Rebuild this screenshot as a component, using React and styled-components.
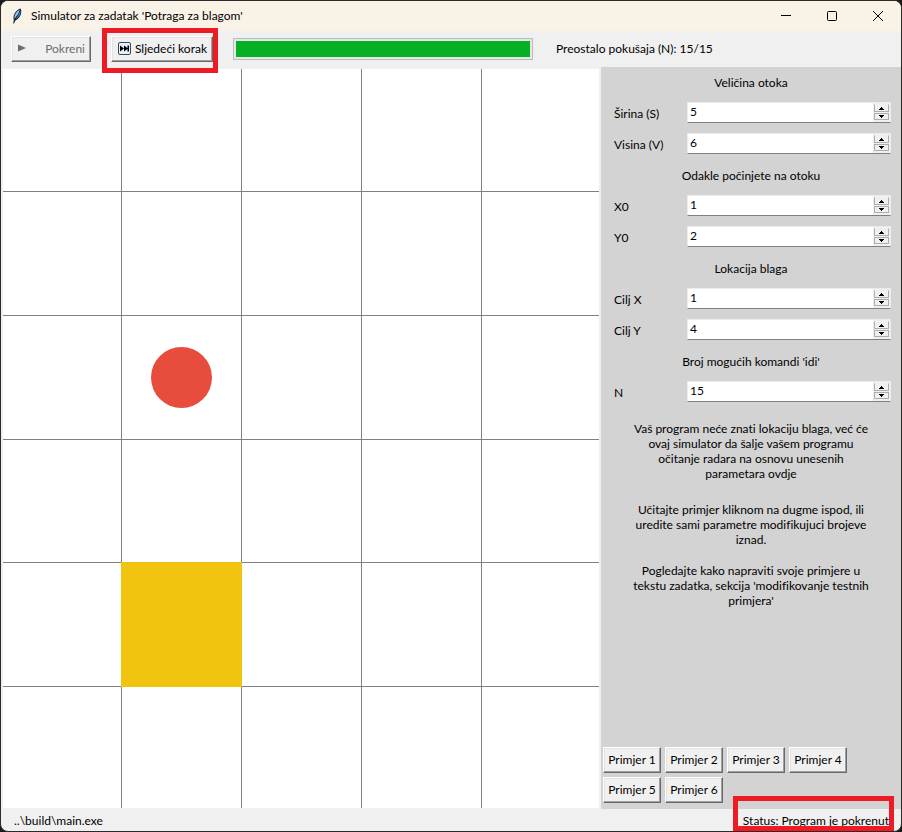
import React, { useState } from "react";
import styled, { createGlobalStyle, css } from "styled-components";

const GlobalStyle = createGlobalStyle`
  *, *::before, *::after { box-sizing: border-box; }
  html, body { margin: 0; height: 100%; background: #1c1a19; }
  body, button, input {
    font-family: "Lato", "Open Sans", sans-serif;
    font-size: 12px;
    font-variant-ligatures: none;
    line-height: 15px;
    color: #000;
  }
  h1, h2, p { margin: 0; font-size: inherit; font-weight: 400; }
`;

const Window = styled.div`
  position: relative;
  display: flex;
  flex-direction: column;
  min-height: 100vh;
  border: 1px solid #2b2a29;
  border-radius: 8px;
  background: #f0f0f0;
  overflow: hidden;
`;

const TitleBar = styled.header`
  display: flex;
  align-items: center;
  height: 30px;
  padding-left: 10px;
  background: #f9f2e6;
`;

const Title = styled.h1`
  flex: 1;
  padding: 0 0 2px 8px;
  white-space: nowrap;
`;

const CaptionButton = styled.button`
  display: grid;
  place-items: center;
  width: 46px;
  height: 30px;
  padding: 0;
  border: 0;
  background: transparent;
`;

const Toolbar = styled.div`
  display: flex;
  align-items: center;
  height: 36px;
  padding: 0 10px;
`;

const bevel = css`
  border: 1px solid;
  border-color: #fff #696969 #696969 #fff;
  box-shadow: inset -1px -1px 0 #a0a0a0, inset 1px 1px 0 #e3e3e3;
  background: #f0f0f0;
`;

const ToolButton = styled.button`
  ${bevel}
  display: flex;
  align-items: center;
  justify-content: space-between;
  width: ${(p) => p.$width}px;
  height: 26px;
  margin-right: 20px;
  padding: 0 5px 2px 6px;
  white-space: nowrap;
  &:disabled { color: #6d6d6d; }
`;

const ProgressTrack = styled.div`
  width: 300px;
  height: 22px;
  padding: 2px;
  border: 1px solid #bcbcbc;
  background: #e6e6e6;
`;

const ProgressFill = styled.div`
  height: 100%;
  background: #06b025;
`;

const Attempts = styled.span`
  padding: 0 0 2px 23px;
  white-space: nowrap;
`;

const Body = styled.main`
  display: flex;
  flex: 1;
`;

const Board = styled.div`
  flex: 1;
  display: grid;
  grid-template-columns: 118fr 120fr 120fr 120fr 118fr;
  grid-template-rows: 122fr 124fr 124fr 123fr 124fr 122fr;
  margin: 2px 2px 1px;
  background: #fff;
`;

const Cell = styled.div`
  position: relative;
  display: grid;
  place-items: center;
  border: 0 solid #808080;
  border-left-width: ${(p) => (p.$x ? 1 : 0)}px;
  border-top-width: ${(p) => (p.$y ? 1 : 0)}px;
`;

const Player = styled.div`
  width: 61px;
  height: 61px;
  border-radius: 50%;
  background: #e74c3c;
`;

const Treasure = styled.div`
  position: absolute;
  z-index: 1;
  inset: -1px;
  background: #f1c40f;
`;

const Sidebar = styled.aside`
  display: flex;
  flex-direction: column;
  width: 300px;
  background: #d3d3d3;
`;

const GroupTitle = styled.h2`
  height: 31px;
  line-height: 31px;
  text-align: center;
`;

const FieldRow = styled.div`
  display: flex;
  align-items: center;
  height: 31px;
  padding: 0 10px 0 13px;
`;

const FieldLabel = styled.label`
  width: 73px;
`;

const SpinBox = styled.div`
  display: flex;
  flex: 1;
  height: 21px;
  margin-bottom: 2px;
  border: 1px solid #ececec;
  border-bottom-color: #808080;
  background: #fff;
`;

const SpinInput = styled.input`
  flex: 1;
  min-width: 0;
  height: 17px;
  padding: 0 2px;
  border: 0;
  outline: 0;
  background: transparent;
  appearance: textfield;
  &::-webkit-inner-spin-button { appearance: none; margin: 0; }
`;

const SpinArrows = styled.div`
  display: grid;
  gap: 1px;
  grid-template-rows: 8px 7px;
  padding: 1px;
  background: #f0f0f0;
`;

const SpinButton = styled.button`
  display: grid;
  place-items: center;
  width: 15px;
  padding: 0;
  border: 1px solid #adadad;
  border-top-color: ${(p) => (p.$up ? "#f0f0f0" : "#adadad")};
  background: #f0f0f0;
`;

const Notes = styled.div`
  padding: 13px 24px 0;
  text-align: center;
`;

const Note = styled.p`
  margin-bottom: ${(p) => p.$gap}px;
  white-space: pre-line;
`;

const Examples = styled.div`
  display: flex;
  flex-wrap: wrap;
  gap: 4px;
  margin-top: auto;
  padding: 0 40px 6px 2px;
`;

const ExampleButton = styled.button`
  ${bevel}
  width: 58px;
  height: 26px;
  padding: 0 0 2px;
  white-space: nowrap;
`;

const StatusBar = styled.footer`
  display: flex;
  align-items: center;
  justify-content: space-between;
  height: 22px;
  padding: 0 12px 0 13px;
`;

const Marker = styled.div`
  position: absolute;
  border: 5px solid #ed1c24;
  pointer-events: none;
`;

const StepMarker = styled(Marker)`
  top: 27px;
  left: 101px;
  width: 116px;
  height: 45px;
`;

const StatusMarker = styled(Marker)`
  right: 7px;
  bottom: 0;
  width: 161px;
  height: 35px;
`;

const FeatherIcon = () => (
  <svg width="12" height="16" viewBox="0 0 12 16" aria-hidden="true">
    <path d="M2.2 15.5 2.8 12C1.6 8 4.2 2.4 9.6.6 11.6 4.6 9.2 10.4 4.4 12.4L3 15.5Z" fill="#16202e" />
    <path d="M3.4 10.8C3 7.4 5.4 3.2 8.8 1.8 8 5 5.4 8.6 3.4 10.8Z" fill="#9cc6f4" />
    <path d="M4.4 11C6.4 8.6 8.4 5.4 9.4 2.4 10.2 5.6 8.2 9.6 4.4 11Z" fill="#3f82d0" />
  </svg>
);

const PlayIcon = () => (
  <svg width="8" height="8" viewBox="0 0 8 8" aria-hidden="true">
    <path d="M0 0.5 8 4 0 7.5Z" fill="#6d6d6d" />
  </svg>
);

const NextIcon = () => (
  <svg width="13" height="13" viewBox="0 0 13 13" aria-hidden="true">
    <rect x="0.5" y="0.5" width="12" height="12" rx="1.5" fill="#e6f0fa" stroke="#3d4657" />
    <path d="M2 3.5 6 6.5 2 9.5ZM6 3.5 10 6.5 6 9.5ZM9.5 3.5H11V9.5H9.5Z" fill="#000" />
  </svg>
);

const ArrowIcon = ({ up }) => (
  <svg width="5" height="3" viewBox="0 0 5 3" shapeRendering="crispEdges" aria-hidden="true">
    <path d={up ? "M2 0H3V1H4V2H5V3H0V2H1V1H2Z" : "M0 0H5V1H4V2H3V3H2V2H1V1H0Z"} fill="#000" />
  </svg>
);

const CAPTION_ICONS = [
  ["Minimiziraj", "M0 4.5H10"],
  ["Maksimiziraj", "M1.5.5H8.5Q9.5.5 9.5 1.5V8.5Q9.5 9.5 8.5 9.5H1.5Q.5 9.5.5 8.5V1.5Q.5.5 1.5.5Z"],
  ["Zatvori", "M0 0 10 10M10 0 0 10"],
];

const GROUPS = [
  ["Veličina otoka", [["width", "Širina (S)"], ["height", "Visina (V)"]]],
  ["Odakle počinjete na otoku", [["x0", "X0"], ["y0", "Y0"]]],
  ["Lokacija blaga", [["goalX", "Cilj X"], ["goalY", "Cilj Y"]]],
  ["Broj mogućih komandi 'idi'", [["n", "N"]]],
];

const NOTES = [
  [21, "Vaš program neće znati lokaciju blaga, već će\novaj simulator da šalje vašem programu\nočitanje radara na osnovu unesenih\nparametara ovdje"],
  [16, "Učitajte primjer kliknom na dugme ispod, ili\nuredite sami parametre modifikujuci brojeve\niznad."],
  [16, "Pogledajte kako napraviti svoje primjere u\ntekstu zadatka, sekcija 'modifikovanje testnih\nprimjera'"],
];

const COLUMNS = 5;
const ROWS = 6;

function SpinField({ id, label, value, onChange }) {
  return (
    <FieldRow>
      <FieldLabel htmlFor={id}>{label}</FieldLabel>
      <SpinBox>
        <SpinInput id={id} type="number" value={value} onChange={(e) => onChange(Number(e.target.value))} />
        <SpinArrows>
          <SpinButton type="button" $up aria-label={`${label} više`} onClick={() => onChange(value + 1)}>
            <ArrowIcon up />
          </SpinButton>
          <SpinButton type="button" aria-label={`${label} manje`} onClick={() => onChange(value - 1)}>
            <ArrowIcon />
          </SpinButton>
        </SpinArrows>
      </SpinBox>
    </FieldRow>
  );
}

export default function App() {
  const [values, setValues] = useState({ width: 5, height: 6, x0: 1, y0: 2, goalX: 1, goalY: 4, n: 15 });
  const left = 15;

  return (
    <>
      <GlobalStyle />
      <Window>
        <TitleBar>
          <FeatherIcon />
          <Title>Simulator za zadatak 'Potraga za blagom'</Title>
          {CAPTION_ICONS.map(([name, d]) => (
            <CaptionButton key={name} type="button" aria-label={name}>
              <svg width="10" height="10" viewBox="0 0 10 10" aria-hidden="true">
                <path d={d} fill="none" stroke="#000" />
              </svg>
            </CaptionButton>
          ))}
        </TitleBar>

        <Toolbar>
          <ToolButton type="button" $width={80} disabled>
            <PlayIcon />
            Pokreni
          </ToolButton>
          <ToolButton type="button" $width={102}>
            <NextIcon />
            Sljedeći korak
          </ToolButton>
          <ProgressTrack role="progressbar" aria-label="Preostalo pokušaja" aria-valuemin={0} aria-valuemax={15} aria-valuenow={left}>
            <ProgressFill style={{ width: `${(left / 15) * 100}%` }} />
          </ProgressTrack>
          <Attempts>Preostalo pokušaja (N): {left}/15</Attempts>
        </Toolbar>

        <Body>
          <Board>
            {Array.from({ length: COLUMNS * ROWS }, (_, i) => {
              const x = i % COLUMNS;
              const y = Math.floor(i / COLUMNS);
              return (
                <Cell key={i} $x={x} $y={y}>
                  {x === values.x0 && y === values.y0 && <Player />}
                  {x === values.goalX && y === values.goalY && <Treasure />}
                </Cell>
              );
            })}
          </Board>

          <Sidebar>
            {GROUPS.map(([title, fields]) => (
              <section key={title}>
                <GroupTitle>{title}</GroupTitle>
                {fields.map(([id, label]) => (
                  <SpinField
                    key={id}
                    id={id}
                    label={label}
                    value={values[id]}
                    onChange={(v) => setValues({ ...values, [id]: v })}
                  />
                ))}
              </section>
            ))}
            <Notes>
              {NOTES.map(([gap, text]) => (
                <Note key={text} $gap={gap}>{text}</Note>
              ))}
            </Notes>
            <Examples>
              {[1, 2, 3, 4, 5, 6].map((n) => (
                <ExampleButton key={n} type="button">Primjer {n}</ExampleButton>
              ))}
            </Examples>
          </Sidebar>
        </Body>

        <StatusBar>
          <span>..\build\main.exe</span>
          <span>Status: Program je pokrenut</span>
        </StatusBar>

        <StepMarker />
        <StatusMarker />
      </Window>
    </>
  );
}
